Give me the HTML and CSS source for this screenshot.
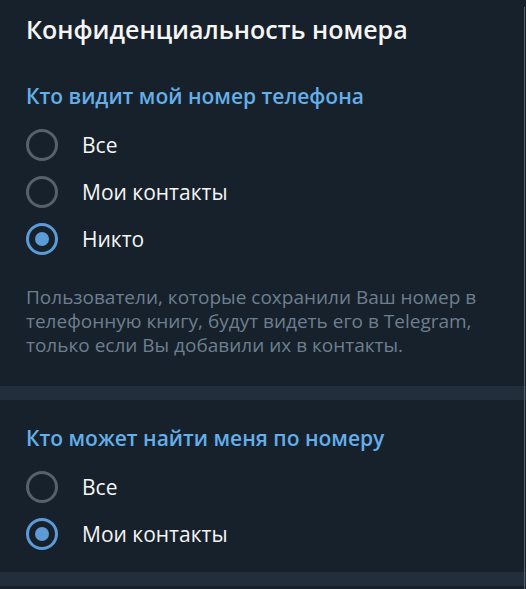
FILE: index.html
```html
<!DOCTYPE html>
<html lang="ru">
<head>
<meta charset="utf-8">
<title>Конфиденциальность номера</title>
<link rel="stylesheet" href="styles.css">
</head>
<body>
<div class="page">
  <h1 class="title">Конфиденциальность номера</h1>

  <section class="group">
    <h2 class="group-title">Кто видит мой номер телефона</h2>
    <ul class="options">
      <li class="option"><span class="radio"></span><span class="label">Все</span></li>
      <li class="option"><span class="radio"></span><span class="label">Мои контакты</span></li>
      <li class="option"><span class="radio radio-on"></span><span class="label">Никто</span></li>
    </ul>
    <p class="about">Пользователи, которые сохранили Ваш номер в телефонную книгу, будут видеть его в Telegram, только если Вы добавили их в контакты.</p>
  </section>

  <div class="divider"></div>

  <section class="group group-second">
    <h2 class="group-title">Кто может найти меня по номеру</h2>
    <ul class="options">
      <li class="option"><span class="radio"></span><span class="label">Все</span></li>
      <li class="option"><span class="radio radio-on"></span><span class="label">Мои контакты</span></li>
    </ul>
  </section>

  <div class="divider"></div>

  <div class="scrollbar"></div>
</div>
</body>
</html>
```

FILE: styles.css
```css
html, body {
  margin: 0;
  padding: 0;
  background: #17212b;
}

body {
  font-family: "Open Sans", "Noto Sans", sans-serif;
  color: #f5f5f5;
  overflow: hidden;
}

.page {
  position: relative;
  width: 526px;
  height: 589px;
  overflow: hidden;
}

.title {
  margin: 0;
  padding: 13px 26px 0;
  font-size: 25px;
  font-weight: 600;
  line-height: 32px;
  color: #f5f5f5;
}

.group {
  padding: 37px 0 29px;
}

.group-second {
  padding: 24px 0 15px;
}

.group-title {
  margin: 0;
  padding: 0 26px;
  font-size: 21px;
  font-weight: 600;
  line-height: 28px;
  color: #64aee9;
}

.options {
  list-style: none;
  margin: 0;
  padding: 11px 0 0;
}

.option {
  display: flex;
  align-items: center;
  height: 47px;
  padding-left: 26px;
  gap: 24px;
}

.radio {
  box-sizing: border-box;
  width: 32px;
  height: 32px;
  border: 3px solid #56616c;
  border-radius: 50%;
  display: flex;
  align-items: center;
  justify-content: center;
  flex: none;
}

.radio-on {
  border-color: #5c9bd6;
}

.radio-on::after {
  content: "";
  width: 14px;
  height: 14px;
  border-radius: 50%;
  background: #5c9bd6;
}

.label {
  font-size: 21px;
  line-height: 28px;
  color: #f5f5f5;
}

.about {
  margin: 23px 0 0;
  padding: 0 26px;
  font-size: 19px;
  line-height: 24px;
  color: #6d7f8f;
}

.divider {
  height: 14px;
  background: #232e3c;
}

.scrollbar {
  position: absolute;
  top: 7px;
  bottom: 0;
  right: 1px;
  width: 1px;
  background: #56606b;
}
```
